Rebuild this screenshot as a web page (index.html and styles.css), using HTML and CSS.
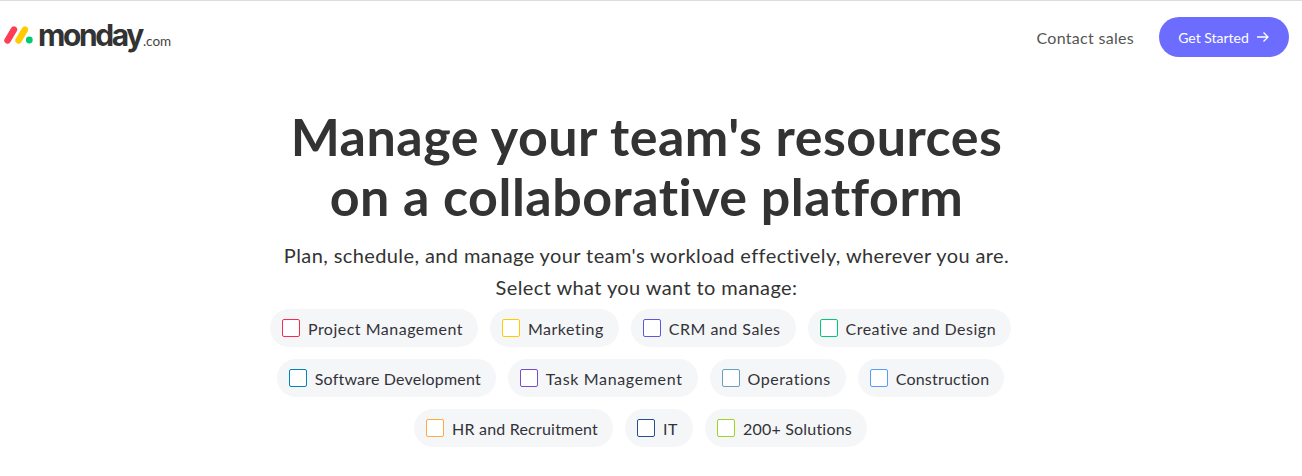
FILE: index.html
```html
<!DOCTYPE html>
<html lang="en">
<head>
    <meta charset="UTF-8">
    <title>monday.com</title>
    <link rel="stylesheet" href="styles.css">
</head>
<body>

    <!-- Header -->
    <header class="header">
        <a class="logo" href="#">
            <svg class="logo-mark" width="29" height="20" viewBox="0 0 29 20">
                <line x1="3.500" y1="15.500" x2="10" y2="4.500" stroke="#ff3d57" stroke-width="6.400" stroke-linecap="round"/>
                <line x1="14.500" y1="15.500" x2="21" y2="4.500" stroke="#ffcb00" stroke-width="6.400" stroke-linecap="round"/>
                <circle cx="25.300" cy="15" r="3.400" fill="#00ca72"/>
            </svg>
            <span class="logo-name">monday</span><span class="logo-tld">.com</span>
        </a>
        <nav class="header-nav">
            <a class="contact" href="#">Contact sales</a>
            <a class="get-started" href="#">Get Started
                <svg width="14" height="12" viewBox="0 0 14 12" fill="none" stroke="#fff" stroke-width="1.300">
                    <path d="M1 6h11M7.500 1.500L12 6l-4.500 4.500"/>
                </svg>
            </a>
        </nav>
    </header>

    <!-- Hero -->
    <section class="hero">
        <h1>Manage your team's resources<br>on a collaborative platform</h1>
        <p class="lead">Plan, schedule, and manage your team's workload effectively, wherever you are.</p>
        <p class="select-title">Select what you want to manage:</p>

        <div class="chips">
            <label class="chip"><span class="box box-pink"></span>Project Management</label>
            <label class="chip"><span class="box box-yellow"></span>Marketing</label>
            <label class="chip"><span class="box box-indigo"></span>CRM and Sales</label>
            <label class="chip"><span class="box box-green"></span>Creative and Design</label>
        </div>
        <div class="chips">
            <label class="chip chip-tight"><span class="box box-blue"></span>Software Development</label>
            <label class="chip chip-wide"><span class="box box-purple"></span>Task Management</label>
            <label class="chip"><span class="box box-steel"></span>Operations</label>
            <label class="chip chip-tight"><span class="box box-sky"></span>Construction</label>
        </div>
        <div class="chips">
            <label class="chip chip-tight"><span class="box box-orange"></span>HR and Recruitment</label>
            <label class="chip"><span class="box box-navy"></span>IT</label>
            <label class="chip chip-tight"><span class="box box-lime"></span>200+ Solutions</label>
        </div>
    </section>

</body>
</html>
```

FILE: styles.css
```css
body {
    margin: 0;
    background: #fff;
    color: #323338;
    font-family: "Lato", "Open Sans", sans-serif;
}

a {
    text-decoration: none;
}

/* Header */
.header {
    display: flex;
    justify-content: space-between;
    align-items: center;
    height: 72px;
    padding: 0 13px 0 4px;
    border-top: 1px solid #dcdcdc;
}

.logo {
    display: flex;
    align-items: baseline;
    color: #333;
    margin-top: -5px;
}

.logo-mark {
    align-self: center;
    margin-right: 5px;
    margin-top: 1px;
}

.logo-name {
    font-family: "Inter", sans-serif;
    font-size: 30px;
    font-weight: 700;
    letter-spacing: -2.4px;
}

.logo-tld {
    font-size: 13.500px;
    margin-left: 1px;
    color: #444;
}

.header-nav {
    display: flex;
    align-items: center;
    gap: 25px;
}

.contact {
    font-size: 16px;
    letter-spacing: 0.3px;
    color: #555;
}

.get-started {
    display: flex;
    align-items: center;
    justify-content: center;
    gap: 7px;
    width: 130px;
    height: 40px;
    border-radius: 20px;
    background: #6c6cff;
    color: #fff;
    font-size: 14px;
}

/* Hero */
.hero {
    text-align: center;
    padding: 33px 9px 0 0;
}

.hero h1 {
    margin: 0;
    font-size: 52px;
    letter-spacing: 0.5px;
    line-height: 60px;
    font-weight: 700;
    color: #333;
}

.lead {
    margin: 13px 0 0;
    font-size: 20px;
    letter-spacing: 0.4px;
    line-height: 32px;
    color: #333;
}

.select-title {
    margin: 0 0 6px;
    font-size: 20px;
    letter-spacing: 0.4px;
    line-height: 32px;
    color: #333;
}

.chips {
    display: flex;
    justify-content: center;
    gap: 12px;
    margin: 0 12px 12px 0;
}

.chip {
    display: flex;
    align-items: center;
    gap: 8px;
    height: 38px;
    padding: 0 15px 0 12px;
    border-radius: 19px;
    background: #f5f6f8;
    font-size: 16px;
    letter-spacing: 0.5px;
    color: #323338;
}

.chip-tight {
    letter-spacing: 0.2px;
}

.chip-wide {
    letter-spacing: 0.65px;
}

/* Checkbox colors */
.box {
    box-sizing: border-box;
    width: 18px;
    height: 18px;
    background: #fff;
    border: 1px solid;
    border-radius: 2px;
}

.box-pink { border-color: #f62b54; }
.box-yellow { border-color: #ffcb00; }
.box-indigo { border-color: #595ad4; }
.box-green { border-color: #00c875; }
.box-blue { border-color: #0086c0; }
.box-purple { border-color: #784bd1; }
.box-steel { border-color: #68a1bd; }
.box-sky { border-color: #579bfc; }
.box-orange { border-color: #fdab3d; }
.box-navy { border-color: #225091; }
.box-lime { border-color: #9cd326; }
```
